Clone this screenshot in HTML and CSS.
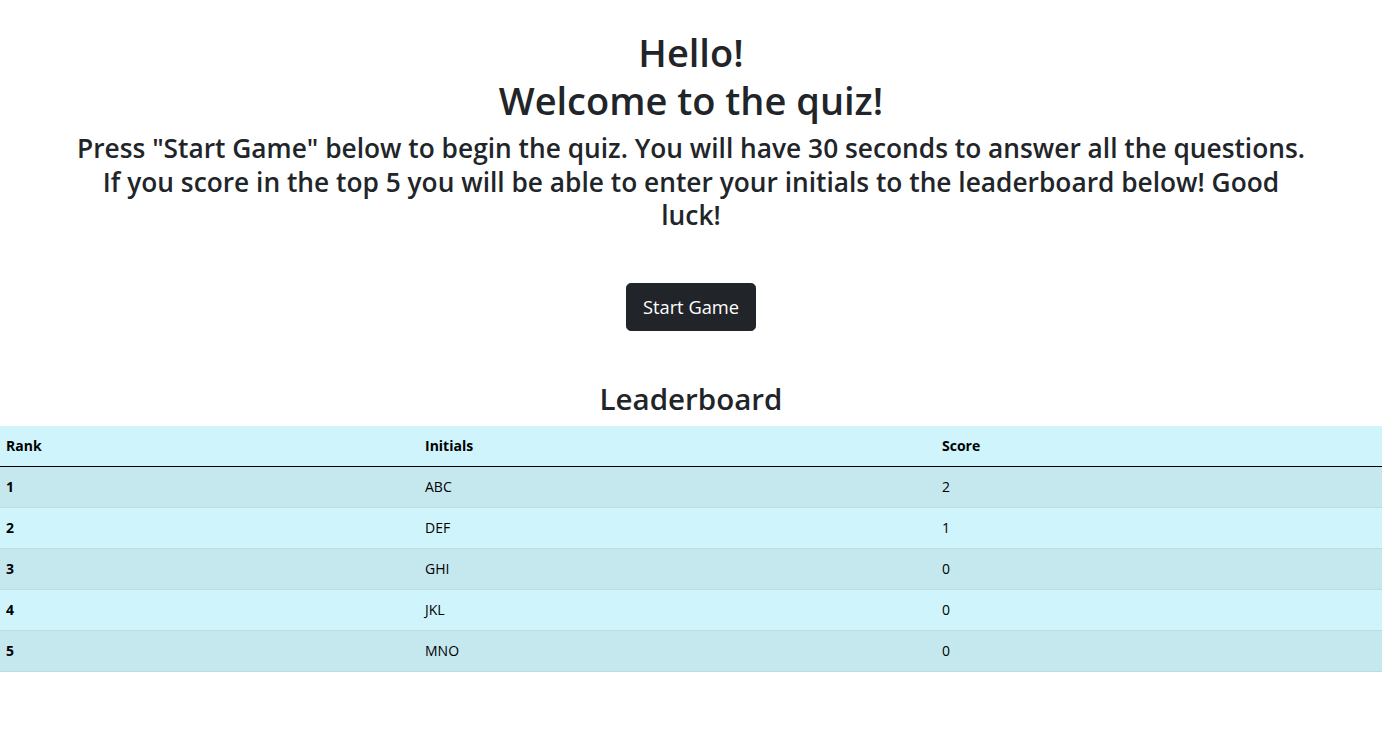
FILE: index.html
```html
<!DOCTYPE html>
<html lang="en">
<head>
<meta charset="utf-8">
<title>Quiz</title>
<link rel="stylesheet" href="styles.css">
</head>
<body>
<main class="page">
  <section class="intro">
    <h1 class="title">Hello!<br>Welcome to the quiz!</h1>
    <p class="lead">Press "Start Game" below to begin the quiz. You will have 30 seconds to answer all the questions.<br>If you score in the top 5 you will be able to enter your initials to the leaderboard below! Good<br>luck!</p>
    <button class="btn-start" type="button">Start Game</button>
  </section>
  <section class="board">
    <h2 class="board-title">Leaderboard</h2>
    <table class="board-table">
      <colgroup>
        <col class="col-rank">
        <col class="col-initials">
        <col class="col-score">
      </colgroup>
      <thead>
        <tr><th>Rank</th><th>Initials</th><th>Score</th></tr>
      </thead>
      <tbody>
        <tr><th>1</th><td>ABC</td><td>2</td></tr>
        <tr><th>2</th><td>DEF</td><td>1</td></tr>
        <tr><th>3</th><td>GHI</td><td>0</td></tr>
        <tr><th>4</th><td>JKL</td><td>0</td></tr>
        <tr><th>5</th><td>MNO</td><td>0</td></tr>
      </tbody>
    </table>
  </section>
</main>
</body>
</html>
```
FILE: styles.css
```css
* { box-sizing: border-box; }
html, body { margin: 0; padding: 0; }
body {
  font-family: "Open Sans", "Noto Sans", sans-serif;
  color: #212529;
  background: #fff;
  font-size: 16px;
  line-height: 1.5;
}
.page { padding-top: 28px; }
.intro {
  display: flex;
  flex-direction: column;
  align-items: center;
  text-align: center;
}
.title {
  margin: 0 0 8px;
  font-size: 38px;
  line-height: 48px;
  font-weight: 600;
}
.lead {
  margin: 0;
  font-size: 26.3px;
  line-height: 33.6px;
  font-weight: 600;
  white-space: nowrap;
}
.btn-start {
  margin-top: 50px;
  font-family: inherit;
  font-size: 18.3px;
  line-height: 30px;
  padding: 8px 16px;
  color: #fff;
  background: #212529;
  border: 1px solid #212529;
  border-radius: 4.8px;
  height: 48px;
  white-space: nowrap;
}
.board { margin-top: 49px; }
.board-title {
  margin: 0 0 8px;
  text-align: center;
  font-size: 29.5px;
  line-height: 38px;
  font-weight: 600;
}
.board-table {
  width: 100%;
  border-collapse: collapse;
  table-layout: fixed;
  font-size: 14px;
  line-height: 24px;
  color: #000;
}
.col-rank { width: 419px; }
.col-initials { width: 517px; }
.board-table th, .board-table td {
  padding: 8px 6px;
  text-align: left;
  border-bottom: 1px solid #badce3;
}
.board-table th { font-weight: 700; }
.board-table td { font-weight: 400; }
.board-table thead tr { background: #cff4fc; }
.board-table thead th { border-bottom: 1px solid #000; height: 41px; }
.board-table tbody tr:nth-child(odd) { background: #c5e8ef; }
.board-table tbody tr:nth-child(even) { background: #cff4fc; }
```
